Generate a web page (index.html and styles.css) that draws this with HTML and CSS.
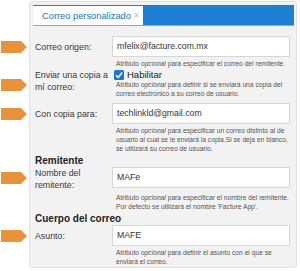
FILE: index.html
```html
<!DOCTYPE html>
<html lang="es">
<head>
  <meta charset="UTF-8">
  <title>Correo personalizado</title>
  <link rel="stylesheet" href="styles.css">
</head>
<body>

<div class="panel">
  <div class="tabbar">
    <div class="tab">Correo personalizado <span class="close">×</span></div>
  </div>

  <div class="form">
    <div class="row">
      <svg class="arrow" width="26" height="12" viewBox="0 0 26 12"><polygon points="0,0 20,0 26,6 20,12 0,12" fill="#e8923b"/></svg>
      <label class="label">Correo origen:</label>
      <div class="input">mfelix@facture.com.mx</div>
      <div class="help">Atributo <i>opcional</i> para especificar el correo del remitente.</div>
    </div>

    <div class="row row-check">
      <svg class="arrow" width="26" height="12" viewBox="0 0 26 12"><polygon points="0,0 20,0 26,6 20,12 0,12" fill="#e8923b"/></svg>
      <label class="label">Enviar una copia a<br>mí correo:</label>
      <div class="check">
        <svg width="10" height="10" viewBox="0 0 10 10"><rect x="0" y="0" width="10" height="10" rx="1.5" fill="#1a73d9"/><polyline points="2,5.2 4.2,7.4 8.2,2.6" fill="none" stroke="#fff" stroke-width="1.6"/></svg>
        Habilitar
      </div>
      <div class="help">Atributo <i>opcional</i> para definir si se enviará una copia del correo electrónico a su correo de usuario.</div>
    </div>

    <div class="row">
      <svg class="arrow" width="26" height="12" viewBox="0 0 26 12"><polygon points="0,0 20,0 26,6 20,12 0,12" fill="#e8923b"/></svg>
      <label class="label">Con copia para:</label>
      <div class="input">techlinkld@gmail.com</div>
      <div class="help">Atributo <i>opcional</i> para especificar un correo distinto al de usuario al cual se le enviará la copia.Si se deja en blanco, se utilizará su correo de usuario.</div>
    </div>

    <h3 class="section">Remitente</h3>

    <div class="row">
      <svg class="arrow" width="26" height="12" viewBox="0 0 26 12"><polygon points="0,0 20,0 26,6 20,12 0,12" fill="#e8923b"/></svg>
      <label class="label">Nombre del<br>remitente:</label>
      <div class="input">MAFe</div>
      <div class="help">Atributo <i>opcional</i> para especificar el nombre del remitente. Por defecto se utilizará el nombre 'Facture App'.</div>
    </div>

    <h3 class="section">Cuerpo del correo</h3>

    <div class="row">
      <svg class="arrow" width="26" height="12" viewBox="0 0 26 12"><polygon points="0,0 20,0 26,6 20,12 0,12" fill="#e8923b"/></svg>
      <label class="label">Asunto:</label>
      <div class="input">MAFE</div>
      <div class="help">Atributo <i>opcional</i> para definir el asunto con el que se enviará el correo.</div>
    </div>
  </div>
</div>

</body>
</html>
```

FILE: styles.css
```css
body {
  margin: 0;
  background: #fff;
  font-family: 'Liberation Sans', Arial, sans-serif;
  color: #333;
}

.panel {
  margin: 1px 3px 0 29px;
  height: 267px;
  box-sizing: border-box;
  background: #f2f2f2;
  border: 1px solid #e2e2e2;
  border-radius: 3px;
  padding: 3px 2px 0 3px;
}

.tabbar {
  display: flex;
  height: 20px;
  background: #1c7fd4;
  border-bottom: 1px solid #6fb0e6;
}

.tab {
  width: 110px;
  box-sizing: border-box;
  background: #fff;
  border-top: 1px solid #1c7fd4;
  color: #2272b9;
  font-size: 9.3px;
  line-height: 19px;
  padding-left: 9px;
}

.close {
  color: #a9c3dc;
  font-size: 10px;
}

.form {
  padding: 10px 0 0 2px;
}

.row {
  position: relative;
  display: grid;
  grid-template-columns: 77px 178px;
  margin-bottom: 1px;
}

.arrow {
  position: absolute;
  left: -34px;
  top: 5px;
}

.label {
  grid-row: 1;
  align-self: center;
  font-size: 8.8px;
  line-height: 12px;
  white-space: nowrap;
  color: #383838;
}

.input {
  height: 21px;
  box-sizing: border-box;
  background: #fff;
  border: 1px solid #d6d6d6;
  font-size: 8.7px;
  line-height: 19px;
  padding-left: 4px;
  color: #333;
}

.help {
  grid-column: 2;
  margin-right: -2px;
  font-size: 6.7px;
  line-height: 9px;
  color: #555;
  padding: 2px 0 0 4px;
}

.row-check {
  margin-bottom: 5px;
}

.row-check .label {
  grid-row: 1 / span 2;
  align-self: start;
}

.row-check .arrow {
  top: 10px;
}

.check {
  display: flex;
  align-items: center;
  gap: 3px;
  height: 11px;
  padding-left: 2px;
  font-size: 9.5px;
  color: #222;
}

.check svg {
  flex: none;
}

.row-check .help {
  padding-top: 0;
}

.section {
  margin: 2px 0 0;
  font-size: 10px;
  line-height: 12px;
  font-weight: bold;
  color: #222;
}
```
